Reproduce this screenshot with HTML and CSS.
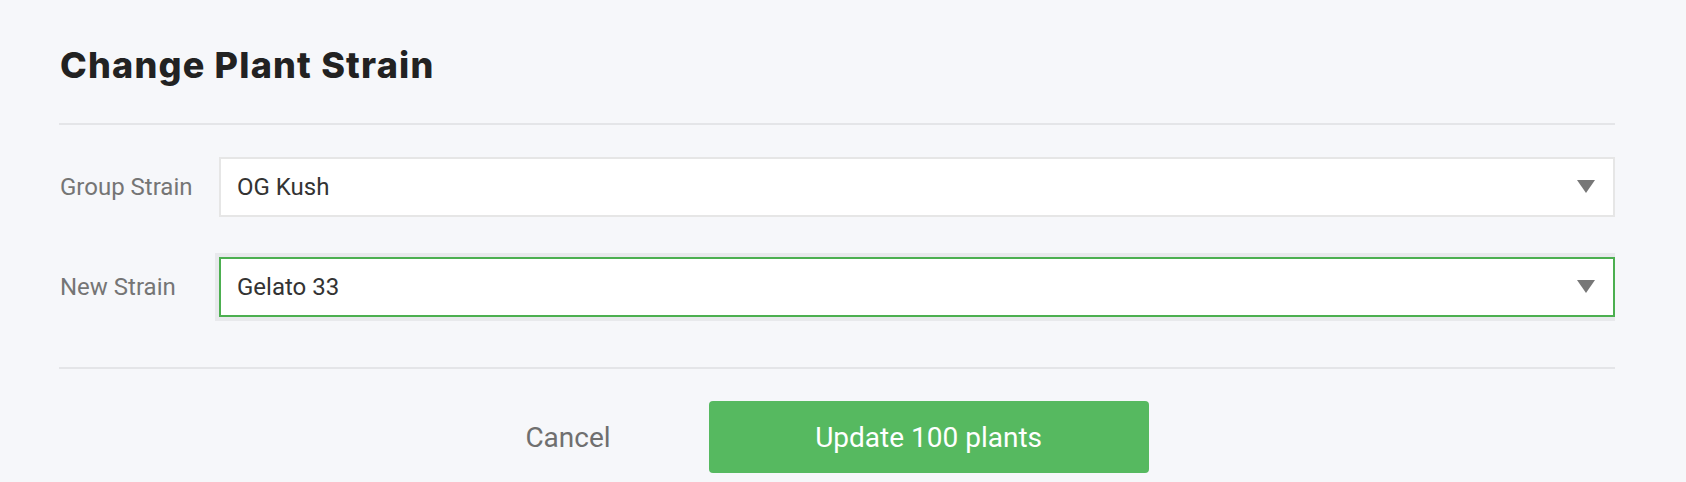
FILE: index.html
```html
<!DOCTYPE html>
<html lang="en">
<head>
  <meta charset="UTF-8">
  <meta name="viewport" content="width=device-width, initial-scale=1.0">
  <title>Change Plant Strain</title>
  <link rel="stylesheet" href="styles.css">
</head>
<body>
  <div class="modal">
    <div class="modal-header">
      <h1>Change Plant Strain</h1>
    </div>

    <div class="modal-body">
      <div class="form-row">
        <label for="group-strain">Group Strain</label>
        <div class="field">
          <select id="group-strain">
            <option selected>OG Kush</option>
            <option>Gelato 33</option>
            <option>Blue Dream</option>
          </select>
          <svg class="arrow" width="18" height="13" viewBox="0 0 18 13"><path d="M0 0h18L9 13z" fill="#777"/></svg>
        </div>
      </div>

      <div class="form-row">
        <label for="new-strain">New Strain</label>
        <div class="field focused">
          <select id="new-strain">
            <option>OG Kush</option>
            <option selected>Gelato 33</option>
            <option>Blue Dream</option>
          </select>
          <svg class="arrow" width="18" height="13" viewBox="0 0 18 13"><path d="M0 0h18L9 13z" fill="#777"/></svg>
        </div>
      </div>
    </div>

    <div class="modal-footer">
      <button class="btn-cancel">Cancel</button>
      <button class="btn-primary">Update 100 plants</button>
    </div>
  </div>
</body>
</html>
```

FILE: styles.css
```css
body {
  margin: 0;
  padding: 0;
  background: #f6f7fa;
  font-family: 'Roboto', 'Liberation Sans', sans-serif;
  color: #333;
}
.modal {
  padding: 0 71px 0 59px;
}
.modal-header {
  padding: 43px 0 36px 1px;
  border-bottom: 2px solid #e4e5e8;
}
h1 {
  margin: 0;
  font-family: 'Inter', 'Liberation Sans', sans-serif;
  font-weight: 800;
  font-size: 36px;
  line-height: 44px;
  letter-spacing: 1.2px;
  color: #222;
}
.modal-body {
  padding: 28px 0 46px 1px;
  border-bottom: 2px solid #e4e5e8;
  display: flex;
  flex-direction: column;
  gap: 32px;
}
.form-row {
  display: grid;
  grid-template-columns: 155px 1fr;
  align-items: center;
}
.form-row label {
  font-size: 24px;
  color: #757575;
}
.field {
  position: relative;
  padding: 4px 0 4px 4px;
}
.field.focused {
  background: #e8e9ec;
}
select {
  display: block;
  width: 100%;
  height: 60px;
  box-sizing: border-box;
  appearance: none;
  -webkit-appearance: none;
  background: #fff;
  border: 2px solid #e6e6e6;
  border-radius: 0;
  padding: 0 50px 0 16px;
  font-family: 'Roboto', 'Liberation Sans', sans-serif;
  font-size: 24px;
  color: #333;
  outline: none;
}
.field.focused select {
  border-color: #4caf50;
}
.arrow {
  position: absolute;
  right: 20px;
  top: 50%;
  margin-top: -7px;
  pointer-events: none;
}
.modal-footer {
  display: flex;
  justify-content: center;
  align-items: center;
  gap: 98px;
  padding: 32px 0 9px;
}
.btn-cancel {
  background: none;
  border: none;
  padding: 0;
  font-family: 'Roboto', 'Liberation Sans', sans-serif;
  font-size: 28px;
  color: #6f6f6f;
  cursor: pointer;
}
.btn-primary {
  width: 440px;
  height: 72px;
  background: #56b960;
  border: none;
  border-radius: 4px;
  font-family: 'Roboto', 'Liberation Sans', sans-serif;
  font-size: 28px;
  color: #fff;
  cursor: pointer;
}
```
